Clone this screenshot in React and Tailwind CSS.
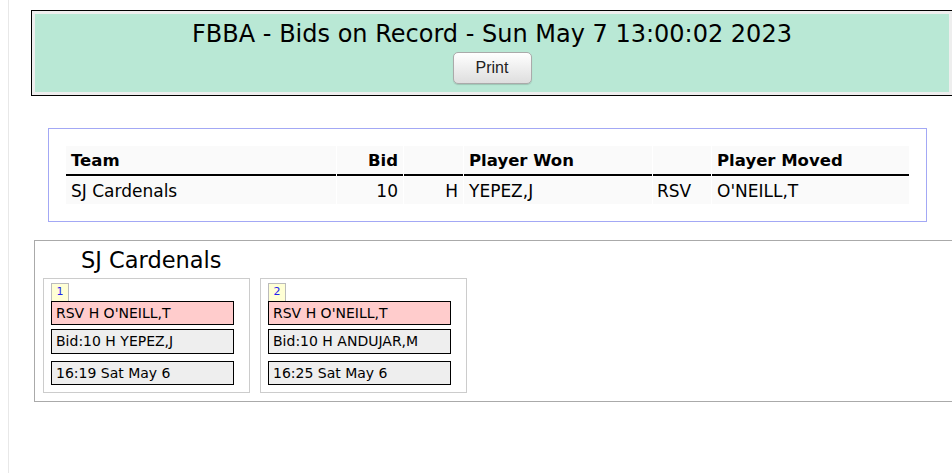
export default function App() {
  const picks = [
    { n: 1, won: "Bid:10 H YEPEZ,J", time: "16:19 Sat May 6" },
    { n: 2, won: "Bid:10 H ANDUJAR,M", time: "16:25 Sat May 6" },
  ];

  return (
    <div className="min-h-[473px] overflow-hidden bg-white font-['DejaVu_Sans','Verdana',sans-serif] text-black">
      <div className="ml-2 min-h-[473px] border-l border-[#e8e8e8] pt-[10px]">
        {/* Header */}
        <div className="ml-[22px] w-[922px] border border-black bg-[#eeeeee] p-[3px]">
          <div className="flex h-[78px] flex-col items-center bg-[#b9e8d5] pt-[5px]">
            <h1 className="text-[24px] leading-[30px]">
              FBBA - Bids on Record - Sun May 7 13:00:02 2023
            </h1>
            <button className="mt-[3px] h-[32px] w-[79px] rounded-[5px] border border-[#aaaaaa] bg-gradient-to-b from-white to-[#dedede] font-['Liberation_Sans',Arial,sans-serif] text-[16px] text-[#222] shadow-[0_1px_1px_rgba(0,0,0,0.15)]">
              Print
            </button>
          </div>
        </div>

        {/* Bids table */}
        <div className="ml-[39px] mt-[32px] w-[879px] border border-[#a3a8f5] p-[17px]">
          <div className="grid grid-cols-[270px_66px_59px_188px_58px_197px] gap-x-px gap-y-px text-[17px]">
            <div className="flex h-[30px] items-center border-b-2 border-black bg-[#fafafa] px-[5px] pt-[2px] text-[16.5px] font-bold">Team</div>
            <div className="flex h-[30px] items-center justify-end border-b-2 border-black bg-[#fafafa] px-[5px] pt-[2px] text-[16.5px] font-bold">Bid</div>
            <div className="h-[30px] border-b-2 border-black bg-[#fafafa]"></div>
            <div className="flex h-[30px] items-center border-b-2 border-black bg-[#fafafa] px-[5px] pt-[2px] text-[16.5px] font-bold">Player Won</div>
            <div className="h-[30px] border-b-2 border-black bg-[#fafafa]"></div>
            <div className="flex h-[30px] items-center border-b-2 border-black bg-[#fafafa] px-[5px] pt-[2px] text-[16.5px] font-bold">Player Moved</div>

            <div className="flex h-[27px] items-center bg-[#fafafa] px-[5px] pt-[2px]">SJ Cardenals</div>
            <div className="flex h-[27px] items-center justify-end bg-[#fafafa] px-[5px] pt-[2px]">10</div>
            <div className="flex h-[27px] items-center justify-end bg-[#fafafa] px-[5px] pt-[2px]">H</div>
            <div className="flex h-[27px] items-center bg-[#fafafa] px-[5px] pt-[2px]">YEPEZ,J</div>
            <div className="flex h-[27px] items-center bg-[#fafafa] px-[4px] pt-[2px]">RSV</div>
            <div className="flex h-[27px] items-center bg-[#fafafa] px-[5px] pt-[2px]">O'NEILL,T</div>
          </div>
        </div>

        {/* Team section */}
        <div className="ml-[25px] mt-[18px] w-[940px] border border-[#aaaaaa] px-[8px] pb-[8px] pt-[5px]">
          <div className="h-[32px] pl-[38px] text-[22.5px] leading-[28px]">SJ Cardenals</div>
          <div className="flex gap-[10px]">
            {picks.map((p) => (
              <div key={p.n} className="w-[207px] border border-[#cccccc] pb-[7px] pl-[7px] pt-[4px]">
                <div className="flex h-[18px] w-[18px] items-center justify-center border border-b-0 border-[#bbbbbb] bg-[#ffffd5] text-[11px] text-[#2222ee]">
                  {p.n}
                </div>
                <div className="flex h-[24px] w-[183px] items-center border border-black bg-[#ffcccc] pl-[4px] text-[14px]">
                  RSV H O'NEILL,T
                </div>
                <div className="mt-[4px] flex h-[25px] w-[183px] items-center border border-black bg-[#eeeeee] pl-[4px] text-[14px]">
                  {p.won}
                </div>
                <div className="mt-[7px] flex h-[24px] w-[183px] items-center border border-black bg-[#eeeeee] pl-[4px] text-[14px]">
                  {p.time}
                </div>
              </div>
            ))}
          </div>
        </div>
      </div>
    </div>
  );
}
